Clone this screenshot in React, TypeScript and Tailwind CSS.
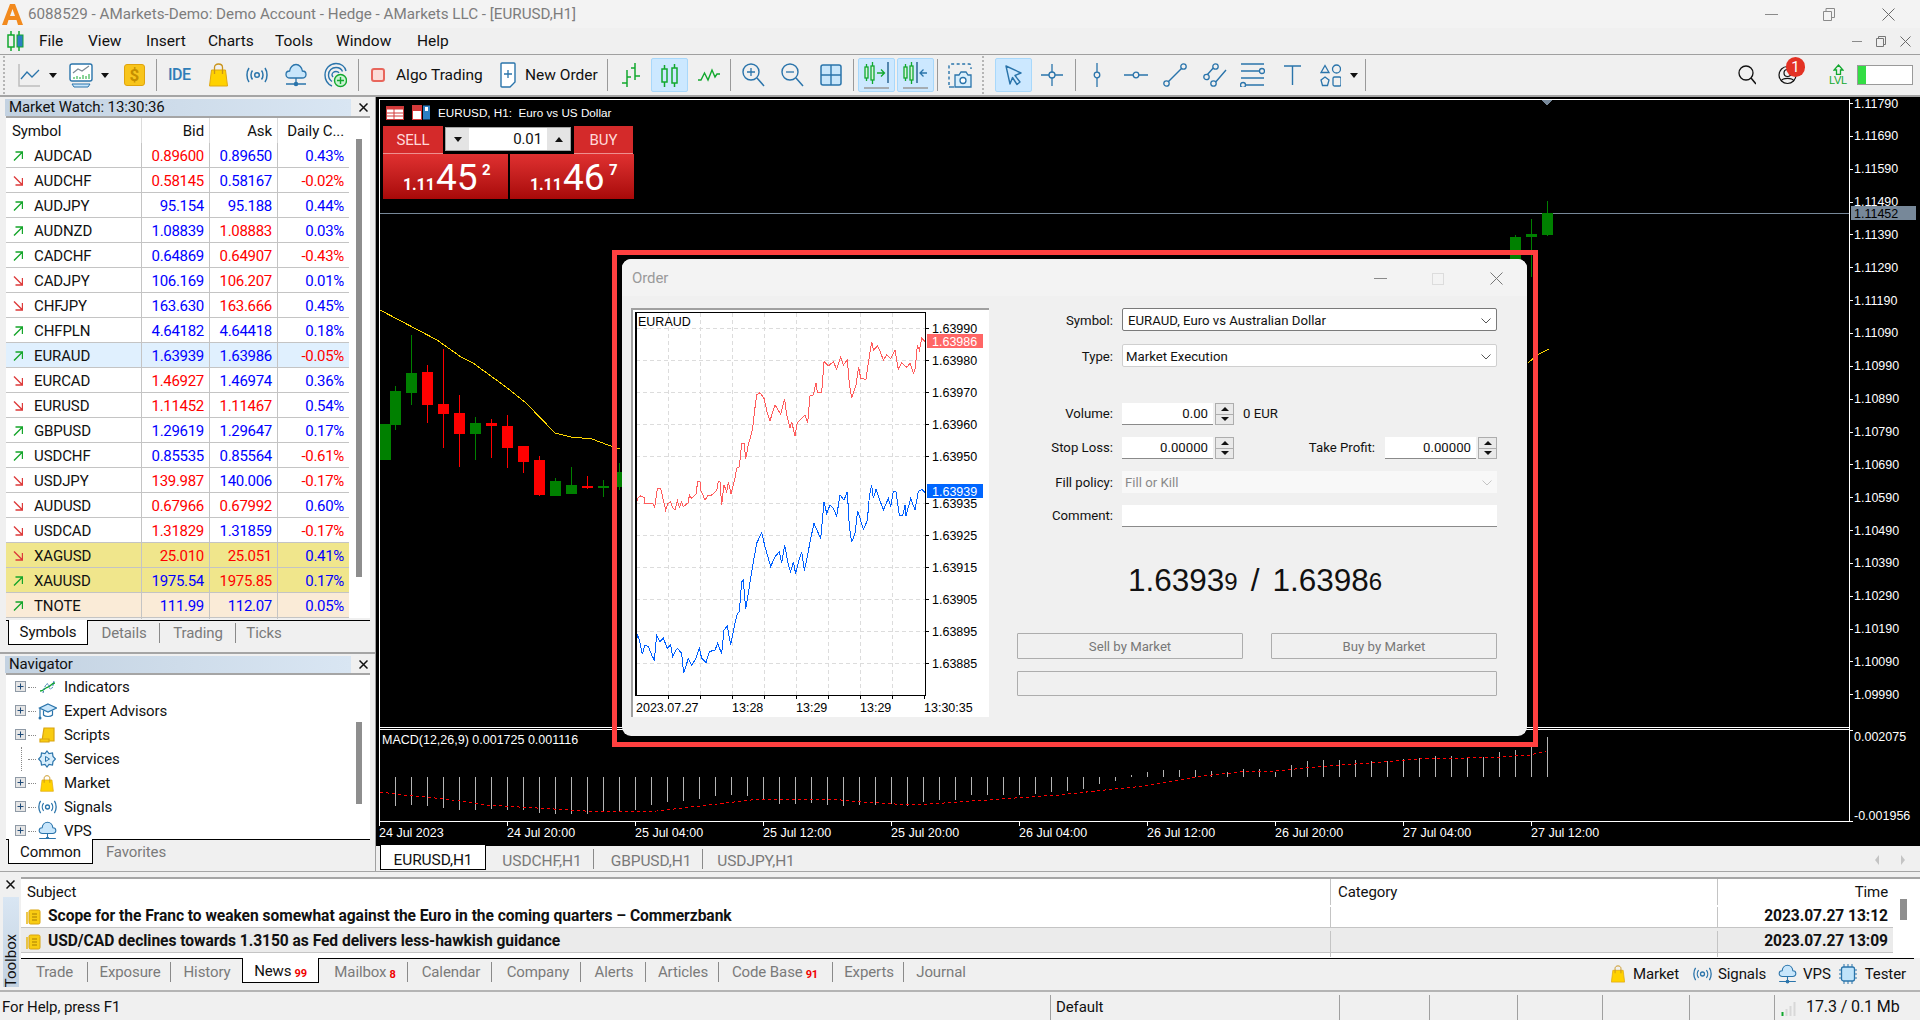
import React from 'react'

const BLUE = '#2a74ab'
const GREEN = '#12a82e'

type Quote = {
  sym: string
  up: boolean
  bid: string
  bidUp: boolean
  ask: string
  askUp: boolean
  chg: string
  bg?: string
}

const quotes: Quote[] = [
  { sym: 'AUDCAD', up: true, bid: '0.89600', bidUp: false, ask: '0.89650', askUp: true, chg: '0.43%' },
  { sym: 'AUDCHF', up: false, bid: '0.58145', bidUp: false, ask: '0.58167', askUp: true, chg: '-0.02%' },
  { sym: 'AUDJPY', up: true, bid: '95.154', bidUp: true, ask: '95.188', askUp: true, chg: '0.44%' },
  { sym: 'AUDNZD', up: true, bid: '1.08839', bidUp: true, ask: '1.08883', askUp: false, chg: '0.03%' },
  { sym: 'CADCHF', up: true, bid: '0.64869', bidUp: true, ask: '0.64907', askUp: false, chg: '-0.43%' },
  { sym: 'CADJPY', up: false, bid: '106.169', bidUp: true, ask: '106.207', askUp: false, chg: '0.01%' },
  { sym: 'CHFJPY', up: false, bid: '163.630', bidUp: true, ask: '163.666', askUp: false, chg: '0.45%' },
  { sym: 'CHFPLN', up: true, bid: '4.64182', bidUp: true, ask: '4.64418', askUp: true, chg: '0.18%' },
  { sym: 'EURAUD', up: true, bid: '1.63939', bidUp: true, ask: '1.63986', askUp: true, chg: '-0.05%', bg: 'bg-[#e0f0fe]' },
  { sym: 'EURCAD', up: false, bid: '1.46927', bidUp: false, ask: '1.46974', askUp: true, chg: '0.36%' },
  { sym: 'EURUSD', up: false, bid: '1.11452', bidUp: false, ask: '1.11467', askUp: false, chg: '0.54%' },
  { sym: 'GBPUSD', up: true, bid: '1.29619', bidUp: true, ask: '1.29647', askUp: true, chg: '0.17%' },
  { sym: 'USDCHF', up: true, bid: '0.85535', bidUp: true, ask: '0.85564', askUp: true, chg: '-0.61%' },
  { sym: 'USDJPY', up: false, bid: '139.987', bidUp: false, ask: '140.006', askUp: true, chg: '-0.17%' },
  { sym: 'AUDUSD', up: false, bid: '0.67966', bidUp: false, ask: '0.67992', askUp: false, chg: '0.60%' },
  { sym: 'USDCAD', up: false, bid: '1.31829', bidUp: false, ask: '1.31859', askUp: true, chg: '-0.17%' },
  { sym: 'XAGUSD', up: false, bid: '25.010', bidUp: false, ask: '25.051', askUp: false, chg: '0.41%', bg: 'bg-[#f0e68c]' },
  { sym: 'XAUUSD', up: true, bid: '1975.54', bidUp: true, ask: '1975.85', askUp: false, chg: '0.17%', bg: 'bg-[#f0e68c]' },
  { sym: 'TNOTE', up: true, bid: '111.99', bidUp: true, ask: '112.07', askUp: true, chg: '0.05%', bg: 'bg-[#faebd7]' },
]

function Ic({ w, h, children, className }: { w: number; h: number; children: React.ReactNode; className?: string }) {
  return (
    <svg width={w} height={h} viewBox={`0 0 ${w} ${h}`} fill="none" className={`shrink-0 ${className ?? ''}`}>
      {children}
    </svg>
  )
}

const Sep = ({ className }: { className: string }) => <div className={`w-px h-[32px] bg-[#9a9a9a] shrink-0 ${className}`} />
const Grip = ({ className }: { className: string }) => (
  <div className={`w-[3px] h-[38px] shrink-0 border-l-2 border-dotted border-[#b5b5b5] ${className}`} />
)
const Drop = ({ className }: { className: string }) => (
  <div className={`w-0 h-0 shrink-0 border-x-[4.5px] border-x-transparent border-t-[5px] border-t-[#111] ${className}`} />
)
const Hl = ({ className, children }: { className: string; children: React.ReactNode }) => (
  <div className={`w-[37px] h-[34px] shrink-0 flex items-center justify-center bg-[#cce8ff] border border-[#a8d8fb] rounded-[2px] ${className}`}>
    {children}
  </div>
)

function Bag({ w = 19, h = 24 }: { w?: number; h?: number }) {
  return (
    <svg width={w} height={h} viewBox="0 0 19 24" fill="none" className="shrink-0">
      <path d="M2.500 7H16.500L18.500 23H.5Z" fill="#ffd200" stroke="#e0a810" />
      <path d="M5.500 11V4.500C5.500 2.500 7 1 9.500 1S13.500 2.500 13.500 4.500V11" stroke="#c9941c" strokeWidth="1.300" />
    </svg>
  )
}

function Signal({ w = 22, h = 16 }: { w?: number; h?: number }) {
  return (
    <svg width={w} height={h} viewBox="0 0 22 16" fill="none" stroke={BLUE} strokeWidth="1.500" className="shrink-0">
      <circle cx="11" cy="8" r="2.300" />
      <path d="M6.500 3.500C4.500 6 4.500 10 6.500 12.500M15.500 3.500C17.500 6 17.500 10 15.500 12.500M3 1C.3 5 .3 11 3 15M19 1C21.700 5 21.700 11 19 15" />
    </svg>
  )
}

function Cloud({ w = 22, h = 24 }: { w?: number; h?: number }) {
  return (
    <svg width={w} height={h} viewBox="0 0 22 24" fill="none" stroke={BLUE} strokeWidth="1.300" className="shrink-0">
      <path d="M5 15C2.500 15 1 13.500 1 11.500S2.600 8 4.600 8C5 4.500 7.600 1.500 11 1.500S17 4.500 17.400 8C19.400 8 21 9.500 21 11.500S19.500 15 17 15Z" fill="#c8e6fb" />
      <path d="M11 15V21M1 21H21" />
      <circle cx="11" cy="21" r="1.600" fill="#2a74ab" />
    </svg>
  )
}

const Radar = () => (
  <Ic w={23} h={26}>
    <g stroke={BLUE} strokeWidth="1.400">
      <path d="M8 24C3.500 22 1 18 1 13 1 6.500 6 1.500 12 1.500C17 1.500 21 4.500 22 9" />
      <path d="M8 19.500C6 18 4.500 15.500 4.500 13 4.500 8.500 8 5.500 12 5.500 15 5.500 17.500 7 18.500 9.500" />
      <path d="M9 15C8.300 14 8 13.500 8 13 8 11 10 9.500 12 9.500 13.500 9.500 14.500 10 15 11" />
    </g>
    <circle cx="16.500" cy="18.500" r="6" fill="#c9f3d2" stroke={GREEN} strokeWidth="1.400" />
    <path d="M16.500 15V22M13 18.500H20" stroke={GREEN} strokeWidth="1.400" />
  </Ic>
)

const Tree = () => (
  <Ic w={12} h={12}>
    <rect x=".5" y=".5" width="10" height="10" fill="#e6e6e6" stroke="#8f9aa6" />
    <path d="M2.500 5.500H8.500M5.500 2.500V8.500" stroke="#1f4a78" />
  </Ic>
)

const MiniCandles = () => (
  <g stroke={GREEN} strokeWidth="1.300">
    <rect x="1" y="6" width="3" height="11" fill="#d6f5dc" />
    <path d="M2.500 3V6M2.500 17V20" />
    <rect x="7" y="5" width="3" height="14" fill="#d6f5dc" />
    <path d="M8.500 1V5M8.500 19V23" />
  </g>
)

function Toolbar() {
  return (
    <div className="h-[40px] flex items-center bg-[#f0f0f0] border-t border-[#a0a0a0] border-b-2 border-b-[#a5a5a5] box-content text-[15.5px] tracking-normal shrink-0">
      <Grip className="ml-[3px]" />
      <Ic w={22} h={23} className="ml-[12px]">
        <path d="M1 0V22H22" stroke="#bdbdbd" strokeWidth="1.500" />
        <path d="M3 15L9 8L14 13L21 6" stroke={BLUE} strokeWidth="1.300" />
      </Ic>
      <Drop className="ml-[9px]" />
      <Ic w={24} h={25} className="ml-[12px]">
        <rect x="1" y="1" width="22" height="17" rx="2" fill="#fff" stroke={BLUE} strokeWidth="1.400" />
        <path d="M4 10L9 6L13 8L20 3" stroke="#7c8a94" strokeWidth="1.200" />
        <path d="M5 16V14M8 16V13M11 16V14M14 16V12M17 16V13M20 16V11" stroke={GREEN} />
        <path d="M3 21H21L19 24H5Z" fill="#c8e6fb" stroke={BLUE} />
      </Ic>
      <Drop className="ml-[8px]" />
      <div className="ml-[15px] w-[21px] h-[22px] rounded-[3px] bg-[#f8c51c] border border-[#e0a40c] flex items-center justify-center text-[#c58e00] text-[17px] font-bold leading-none">$</div>
      <Sep className="ml-[11px]" />
      <div className="ml-[11px] w-[22px] text-[#2f7db8] text-[16px] font-medium leading-none tracking-[-0.5px]">IDE</div>
      <div className="ml-[19px]"><Bag /></div>
      <div className="ml-[18px]"><Signal /></div>
      <div className="ml-[17px]"><Cloud /></div>
      <div className="ml-[17px]"><Radar /></div>
      <Sep className="ml-[11px]" />
      <div className="ml-[12px] w-[14px] h-[14px] rounded-[3px] bg-[#fbdcd7] border-2 border-[#e8665c]" />
      <div className="ml-[11px] w-[86px] text-[#111] pt-[2px] whitespace-nowrap">Algo Trading</div>
      <Ic w={16} h={26} className="ml-[18px]">
        <path d="M2 1H14Q15 1 15 2V20L10 25H2Q1 25 1 24V2Q1 1 2 1Z" fill="#fff" stroke={BLUE} strokeWidth="1.400" />
        <path d="M8 8V16M4 12H12" stroke={BLUE} strokeWidth="1.300" />
      </Ic>
      <div className="ml-[9px] w-[74px] text-[#111] pt-[2px] whitespace-nowrap">New Order</div>
      <Sep className="ml-[8px]" />
      <Ic w={20} h={26} className="ml-[13px]">
        <path d="M6 25V8M1 21H6M6 15H10M14 18V1M10 6H14M14 14H19" stroke={GREEN} strokeWidth="1.500" />
      </Ic>
      <Hl className="ml-[10px]">
        <Ic w={17} h={25}>
          <g stroke={GREEN} strokeWidth="1.500">
            <rect x="1" y="6" width="5" height="13" />
            <path d="M3.500 2V6M3.500 19V24" />
            <rect x="11" y="5" width="5" height="15" />
            <path d="M13.500 1V5M13.500 20V24" />
          </g>
        </Ic>
      </Hl>
      <Ic w={22} h={14} className="ml-[10px]">
        <path d="M0 12H3L6.500 5L10 12L14 2L17 9L19 6H22" stroke={GREEN} strokeWidth="1.400" />
      </Ic>
      <Sep className="ml-[10px]" />
      <Ic w={23} h={24} className="ml-[11px]">
        <circle cx="9" cy="9" r="8" stroke={BLUE} strokeWidth="1.400" />
        <path d="M15 15L22 23" stroke={BLUE} strokeWidth="1.500" />
        <path d="M5 9H13M9 5V13" stroke={BLUE} strokeWidth="1.300" />
      </Ic>
      <Ic w={23} h={24} className="ml-[16px]">
        <circle cx="9" cy="9" r="8" stroke={BLUE} strokeWidth="1.400" />
        <path d="M15 15L22 23" stroke={BLUE} strokeWidth="1.500" />
        <path d="M5 9H13" stroke={BLUE} strokeWidth="1.300" />
      </Ic>
      <Ic w={22} h={22} className="ml-[16px]">
        <rect x="1" y="1" width="20" height="20" rx="2" fill="#c8e6fb" stroke={BLUE} strokeWidth="1.500" />
        <path d="M11 1V21M1 11H21" stroke={BLUE} strokeWidth="1.400" />
      </Ic>
      <Sep className="ml-[11px]" />
      <Hl className="ml-[4px]">
        <Ic w={25} h={28}>
          <MiniCandles />
          <path d="M13 12H20M17 8.500L20.500 12L17 15.500" stroke={GREEN} strokeWidth="1.300" />
          <path d="M24 1V22" stroke="#1f5c8c" strokeWidth="1.400" />
          <path d="M0 27H25" stroke="#999" strokeWidth="1.500" />
        </Ic>
      </Hl>
      <Hl className="ml-[2px]">
        <Ic w={25} h={28}>
          <MiniCandles />
          <path d="M14 1V22" stroke="#1f5c8c" strokeWidth="1.400" />
          <path d="M24 12H17M20.500 8.500L17 12L20.500 15.500" stroke={BLUE} strokeWidth="1.300" />
          <path d="M0 27H25" stroke="#999" strokeWidth="1.500" />
        </Ic>
      </Hl>
      <Sep className="ml-[3px]" />
      <Ic w={24} h={25} className="ml-[10px]">
        <path d="M1 22V3Q1 1 3 1H21Q23 1 23 3V6" stroke={BLUE} strokeWidth="1.400" strokeDasharray="3 2.500" />
        <path d="M1 24H6" stroke={BLUE} strokeWidth="1.400" />
        <path d="M7 24V12H11L13 9H18L20 12H23V24Z" fill="#d8eefc" stroke={BLUE} strokeWidth="1.300" />
        <circle cx="15" cy="17.500" r="3" fill="#fff" stroke={BLUE} strokeWidth="1.300" />
      </Ic>
      <Grip className="ml-[10px]" />
      <Hl className="ml-[10px]">
        <Ic w={20} h={22}>
          <path d="M2 2L17 9L11 11.500L16 18L13 20.500L8.500 13.500L6 20Z" stroke={BLUE} strokeWidth="1.400" strokeLinejoin="round" />
        </Ic>
      </Hl>
      <Ic w={22} h={22} className="ml-[9px]">
        <path d="M11 0V8M11 14V22M0 11H8M14 11H22" stroke={BLUE} strokeWidth="1.300" />
        <circle cx="11" cy="11" r="3" stroke={BLUE} strokeWidth="1.300" />
      </Ic>
      <Sep className="ml-[12px]" />
      <Ic w={8} h={24} className="ml-[17px]">
        <path d="M4 0V9M4 15V24" stroke={BLUE} strokeWidth="1.300" />
        <circle cx="4" cy="12" r="2.800" stroke={BLUE} strokeWidth="1.300" />
      </Ic>
      <Ic w={24} h={8} className="ml-[23px]">
        <path d="M0 4H9M15 4H24" stroke={BLUE} strokeWidth="1.300" />
        <circle cx="12" cy="4" r="2.800" stroke={BLUE} strokeWidth="1.300" />
      </Ic>
      <Ic w={24} h={24} className="ml-[15px]">
        <path d="M5.500 18.500L18.500 5.500" stroke={BLUE} strokeWidth="1.400" />
        <circle cx="3.500" cy="20.500" r="2.700" stroke={BLUE} strokeWidth="1.300" />
        <circle cx="20.500" cy="3.500" r="2.700" stroke={BLUE} strokeWidth="1.300" />
      </Ic>
      <Ic w={24} h={24} className="ml-[16px]">
        <path d="M4 12L12 3M11 21L23 7" stroke={BLUE} strokeWidth="1.400" />
        <circle cx="3.500" cy="14" r="2.700" fill="#f0f0f0" stroke={BLUE} strokeWidth="1.300" />
        <circle cx="12.500" cy="3.500" r="2.700" fill="#f0f0f0" stroke={BLUE} strokeWidth="1.300" />
        <circle cx="10.500" cy="20.500" r="2.700" fill="#f0f0f0" stroke={BLUE} strokeWidth="1.300" />
      </Ic>
      <Ic w={25} h={24} className="ml-[13px]">
        <path d="M1 1H24M1 8H19M1 15H24M5 22H24" stroke={BLUE} strokeWidth="1.300" />
        <circle cx="22" cy="8" r="2.500" fill="#f0f0f0" stroke={BLUE} strokeWidth="1.300" />
        <circle cx="3" cy="22" r="2.500" fill="#f0f0f0" stroke={BLUE} strokeWidth="1.300" />
      </Ic>
      <Ic w={17} h={20} className="ml-[19px]">
        <path d="M0 1H17M8.500 1V20" stroke={BLUE} strokeWidth="1.400" />
      </Ic>
      <Ic w={21} h={23} className="ml-[19px]">
        <path d="M5 1.500L9 8.500H1Z" stroke={BLUE} strokeWidth="1.300" />
        <circle cx="16.500" cy="5" r="4" stroke={BLUE} strokeWidth="1.300" />
        <path d="M5 13L9 16L7.500 21.500H2.500L1 16Z" stroke={BLUE} strokeWidth="1.300" />
        <rect x="13" y="13" width="8" height="9" rx="1.500" stroke={BLUE} strokeWidth="1.300" />
      </Ic>
      <Drop className="ml-[9px]" />
      <Sep className="ml-[7px]" />
      <div className="ml-auto relative flex items-center">
        <Ic w={18} h={20}>
          <circle cx="8" cy="8" r="7" stroke="#111" strokeWidth="1.300" />
          <path d="M13 13L18 19" stroke="#111" strokeWidth="1.500" />
        </Ic>
        <Ic w={19} h={22} className="ml-[22px]">
          <circle cx="9.500" cy="11" r="8.500" stroke="#111" strokeWidth="1.200" />
          <circle cx="9.500" cy="9" r="3.500" stroke="#111" strokeWidth="1.200" />
          <path d="M3 17C5 13.500 14 13.500 16 17" stroke="#111" strokeWidth="1.200" />
        </Ic>
        <div className="absolute left-[48px] -top-[7px] w-[19px] h-[20px] rounded-full bg-[#e33224] text-white text-[15px] leading-[20px] text-center">1</div>
        <div className="ml-[33px] w-[16px] flex flex-col items-center text-[#12a82e] leading-none">
          <Ic w={11} h={11}>
            <path d="M5.500 1L10 6H7.500V10.500H3.500V6H1Z" stroke={GREEN} strokeWidth="1.300" />
          </Ic>
          <span className="text-[11px] font-[Liberation_Sans,sans-serif] tracking-[-0.3px]">LVL</span>
        </div>
        <div className="ml-[11px] mr-[7px] w-[56px] h-[20px] border border-[#9a9a9a] bg-white">
          <div className="w-[8px] h-full bg-[#33dd44]" />
        </div>
      </div>
    </div>
  )
}

function PanelHead({ title }: { title: string }) {
  return (
    <div className="flex items-center h-[17px] pl-[5px] shrink-0">
      <div className="w-[346px] h-[17px] pl-[4px] leading-[17px] bg-linear-to-r from-[#c3d2e1] to-[#d9e6f3] text-[#111]">{title}</div>
      <X className="ml-[8px]" />
    </div>
  )
}

const X = ({ className }: { className: string }) => (
  <Ic w={9} h={9} className={className}>
    <path d="M.5 .5L8.500 8.500M8.500 .5L.5 8.500" stroke="#111" strokeWidth="1.500" />
  </Ic>
)

function Tab({ label, active, className, sup }: { label: string; active?: boolean; className: string; sup?: string }) {
  return (
    <div
      className={`flex items-center justify-center h-[25px] shrink-0 whitespace-nowrap ${
        active ? 'bg-white border-x border-b border-black text-[#111] -mt-px' : 'text-[#7a7a7a]'
      } ${className}`}
    >
      {label}
      {sup && <span className="ml-[3px] mt-[6px] text-[11px] font-bold text-[#f00000]">{sup}</span>}
    </div>
  )
}

const TabSep = ({ className }: { className: string }) => <div className={`w-px h-[20px] bg-[#8a8a8a] shrink-0 ${className}`} />

function MarketWatch() {
  return (
    <div className="h-[555px] pt-[2px] flex flex-col">
      <PanelHead title="Market Watch: 13:30:36" />
      <div className="ml-[6px] w-[364px] h-[502px] bg-white border-t-2 border-[#a5a5a5] flex">
        <div className="w-[343px]">
          <div className="grid grid-cols-[136px_68px_68px_71px] h-[25px] items-center text-[#111]">
            <div className="pl-[6px] border-r border-[#dcdcdc] h-full leading-[27px]">Symbol</div>
            <div className="pr-[5px] text-right border-r border-[#dcdcdc] h-full leading-[27px]">Bid</div>
            <div className="pr-[5px] text-right border-r border-[#dcdcdc] h-full leading-[27px]">Ask</div>
            <div className="pr-[5px] text-right h-full leading-[27px] whitespace-nowrap">Daily C...</div>
          </div>
          {quotes.map((q) => (
            <div key={q.sym} className={`grid grid-cols-[136px_68px_68px_71px] h-[25px] leading-[26px] border-b border-[#c4c4c4] ${q.bg ?? ''}`}>
              <div className="flex items-center border-r border-[#c4c4c4] text-[#111]">
                {q.up ? (
                  <Ic w={10} h={10} className="ml-[7px] mr-[11px]">
                    <path d="M1 9.500L9 1.500M2.500 1H9.500V8" stroke="#14a52a" strokeWidth="1.400" />
                  </Ic>
                ) : (
                  <Ic w={10} h={10} className="ml-[7px] mr-[11px]">
                    <path d="M1 .5L9 8.500M9.500 2V9H2.500" stroke="#dd3a3a" strokeWidth="1.400" />
                  </Ic>
                )}
                {q.sym}
              </div>
              <div className={`pr-[5px] text-right border-r border-[#c4c4c4] tracking-[-0.3px] ${q.bidUp ? 'text-[#0000ff]' : 'text-[#ff0000]'}`}>{q.bid}</div>
              <div className={`pr-[5px] text-right border-r border-[#c4c4c4] tracking-[-0.3px] ${q.askUp ? 'text-[#0000ff]' : 'text-[#ff0000]'}`}>{q.ask}</div>
              <div className={`pr-[5px] text-right tracking-[-0.3px] ${q.chg.startsWith('-') ? 'text-[#ff0000]' : 'text-[#0000ff]'}`}>{q.chg}</div>
            </div>
          ))}
        </div>
        <div className="ml-[7px] mt-[21px] w-[6px] h-[438px] bg-[#8e8e8e]" />
      </div>
      <div className="mt-[2px] ml-[6px] w-[364px] h-[27px] border-t border-black flex items-start bg-[#f0f0f0]">
        <Tab label="Symbols" active className="ml-[2px] w-[80px]" />
        <Tab label="Details" className="ml-[14px] w-[44px]" />
        <TabSep className="ml-[13px] mt-[2px]" />
        <Tab label="Trading" className="ml-[13px] w-[50px]" />
        <TabSep className="ml-[12px] mt-[2px]" />
        <Tab label="Ticks" className="ml-[12px] w-[32px]" />
      </div>
    </div>
  )
}

const navItems: { label: string; icon: React.ReactNode; box?: boolean }[] = [
  {
    label: 'Indicators',
    box: true,
    icon: (
      <Ic w={17} h={15}>
        <path d="M1 11C4 11 5 9 7 8S10 7 12 5 15 3 16 3" stroke={GREEN} strokeWidth="1.300" />
        <path d="M4 13C5 8 7 3 9 4S10 10 12 9 14 4 15 1" stroke={BLUE} strokeWidth="1" strokeDasharray="2 1" />
      </Ic>
    ),
  },
  {
    label: 'Expert Advisors',
    box: true,
    icon: (
      <Ic w={19} h={18}>
        <path d="M10 2L18.500 6L10 10L1.500 6Z" fill="#c8e6fb" stroke={BLUE} strokeWidth="1.200" />
        <path d="M5.500 8.500V13C7.500 15 12.500 15 14.500 13V8.500M2 6V15" stroke={BLUE} strokeWidth="1.200" />
        <circle cx="2" cy="16" r="1.500" fill={BLUE} />
      </Ic>
    ),
  },
  {
    label: 'Scripts',
    box: true,
    icon: (
      <Ic w={16} h={16}>
        <path d="M5 1H15V14H3Z" fill="#f8cc12" stroke="#d9a40f" strokeWidth="1.200" />
        <path d="M1 12H10V15H1Z" fill="#f8cc12" stroke="#d9a40f" strokeWidth="1.200" />
      </Ic>
    ),
  },
  {
    label: 'Services',
    icon: (
      <Ic w={18} h={18}>
        <path d="M9 1L11 3.500L14.500 3L15 6.500L17.500 9L15 11.500L14.500 15L11 14.500L9 17L7 14.500L3.500 15L3 11.500L.5 9L3 6.500L3.500 3L7 3.500Z" fill="#d8eefc" stroke={BLUE} strokeWidth="1.200" />
        <path d="M7.500 6.500L11.500 9L7.500 11.500Z" stroke={BLUE} />
      </Ic>
    ),
  },
  { label: 'Market', box: true, icon: <Bag w={14} h={17} /> },
  { label: 'Signals', box: true, icon: <Signal w={19} h={14} /> },
  { label: 'VPS', box: true, icon: <Cloud w={19} h={20} /> },
]

function Navigator() {
  return (
    <div className="h-[219px] border-t-2 border-[#a5a5a5] pt-[2px] flex flex-col">
      <PanelHead title="Navigator" />
      <div className="ml-[6px] w-[364px] h-[166px] bg-white border-t-2 border-[#a5a5a5] flex">
        <div className="w-[343px] pl-[9px]">
          {navItems.map((n) => (
            <div key={n.label} className="h-[24px] flex items-center text-[#111]">
              <div className="w-[12px] flex justify-center">{n.box ? <Tree /> : <div className="w-px h-[24px] border-l border-dotted border-[#888]" />}</div>
              <div className="w-[8px] ml-[1px] border-t border-dotted border-[#888]" />
              <div className="w-[20px] ml-[1px] flex justify-center">{n.icon}</div>
              <div className="ml-[7px]">{n.label}</div>
            </div>
          ))}
        </div>
        <div className="ml-[7px] mt-[47px] w-[6px] h-[82px] bg-[#8e8e8e]" />
      </div>
      <div className="ml-[6px] w-[364px] h-[27px] border-t border-black flex items-start bg-[#f0f0f0]">
        <Tab label="Common" active className="ml-[2px] w-[85px] pt-[2px]" />
        <Tab label="Favorites" className="ml-[14px] w-[58px]" />
      </div>
    </div>
  )
}

const prices = ['1.11790', '1.11690', '1.11590', '1.11490', '1.11390', '1.11290', '1.11190', '1.11090', '1.10990', '1.10890', '1.10790', '1.10690', '1.10590', '1.10490', '1.10390', '1.10290', '1.10190', '1.10090', '1.09990']
const times = ['24 Jul 2023', '24 Jul 20:00', '25 Jul 04:00', '25 Jul 12:00', '25 Jul 20:00', '26 Jul 04:00', '26 Jul 12:00', '26 Jul 20:00', '27 Jul 04:00', '27 Jul 12:00']

// x, body top and bottom, wick top and bottom, up
const bars: [number, number, number, number, number, boolean][] = [
  [385, 424, 460, 424, 460, true],
  [395.5, 391, 425, 386, 430, true],
  [411.5, 373, 393, 335, 405, true],
  [427.5, 372, 405, 365, 423, false],
  [443.5, 404, 414, 349, 448, false],
  [459.5, 413, 434, 395, 467, false],
  [475.5, 423, 434, 417, 460, true],
  [491.5, 423, 426, 419, 458, false],
  [507.5, 426, 448, 415, 468, false],
  [523.5, 446, 462, 446, 473, false],
  [539.5, 460, 495, 456, 496, false],
  [555.5, 481, 496, 478, 496, true],
  [571.5, 485, 494, 467, 494, true],
  [587.5, 486, 488, 476, 489, false],
  [603.5, 486, 488, 480, 497, true],
  [619.5, 472, 487, 463, 490, true],
  [1515.5, 237, 262, 235, 262, true],
  [1531.5, 234, 237, 219, 277, true],
  [1547.5, 213, 235, 201, 236, true],
]

// histogram height per bar, negative below the zero line
const macd = [-29, -28, -29, -31, -33, -33, -32, -33, -33, -36, -37, -37, -37, -35, -35, -33, -28, -25, -24, -22, -19, -18, -19, -23, -27, -27, -26, -28, -29, -28, -28, -27, -29, -25, -23, -23, -18, -18, -18, -18, -17, -15, -14, -12, -7, -4, 2, 5, 7, 7, 7, 6.5, 5, 7.6, 7.6, 5, 12, 16, 17, 17, 17, 16, 16, 18, 19, 21, 21, 19, 20, 25, 27, 33, 40]

const signal = '380,792 404,795 427,797 460,801 485,805 519,807 554,809 600,812 657,811 691,807 726,803 760,799 795,799 829,799 864,802 910,805 944,803 1001,799 1059,795 1105,790 1145,786 1174,781 1203,776 1231,773 1243,771 1275,771 1305,768 1340,765 1370,763 1405,760 1435,758 1465,758 1500,757 1530,755 1546,751'
const ma = '380,310 437,340 461,357 473,363 506,387 526,403 555,433 571,437 592,439 608,445 620,449'
const chartLabel = 'font-[Liberation_Sans,sans-serif] text-[12.5px] tracking-normal'

function MainChart() {
  return (
    <svg viewBox="376 97 1544 748" width="1544" height="748" shapeRendering="crispEdges" className={`block ${chartLabel}`}>
      <rect x="376" y="97" width="1544" height="748" fill="#000" />
      <path d="M379.500 99V821.500H1849M379 99.500H1849.500V821.500M379 727.500H1849.500M379 729.500H1849.500" stroke="#fff" />
      <path d="M380 213.500H1849" stroke="#778899" />
      <polygon points="1542,100 1552,100 1547,106" fill="#778899" />
      <polyline points={ma} stroke="#ffd700" fill="none" />
      <polyline points="1528,363 1537,355 1549,349" stroke="#ffd700" fill="none" />
      {bars.map(([x, t, b, wt, wb, up]) => (
        <g key={x}>
          <path d={`M${x} ${wt}V${wb}`} stroke={up ? '#008000' : '#ff0000'} />
          <rect x={x - 5.5} y={t} width="11" height={b - t} fill={up ? '#008000' : '#ff0000'} />
        </g>
      ))}
      {macd.map((v, i) => (
        <path key={i} d={`M${395.5 + i * 16} 777V${777 - v}`} stroke="#b4b4b4" />
      ))}
      <polyline points={signal} stroke="#ff0000" fill="none" strokeDasharray="3 3" />
      {prices.map((p, i) => (
        <g key={p}>
          <path d={`M1849 ${103.5 + i * 32.85}H1853`} stroke="#fff" />
          <text x="1854" y={107.5 + i * 32.85} fill="#fff">{p}</text>
        </g>
      ))}
      <rect x="1851" y="206" width="65" height="14" fill="#778899" />
      <text x="1854" y="217.500" fill="#000">1.11452</text>
      <path d="M1849 730H1853M1849 821H1853" stroke="#fff" />
      <text x="1854" y="740.500" fill="#fff">0.002075</text>
      <text x="1854" y="819.500" fill="#fff">-0.001956</text>
      <text x="382" y="743.500" fill="#fff">MACD(12,26,9) 0.001725 0.001116</text>
      {times.map((t, i) => (
        <g key={t}>
          <path d={`M${507.5 + (i - 1) * 128} 821V826`} stroke="#fff" />
          <text x={379 + i * 128} y="837" fill="#fff">{t}</text>
        </g>
      ))}
    </svg>
  )
}

function TradePanel() {
  return (
    <div className="absolute left-[7px] top-[29px] w-[251px] h-[73px] text-white">
      <div className="flex h-[28px]">
        <div className="w-[60px] pt-[2px] bg-[#d42a2a] flex items-center justify-center border-b border-[#ee8f8f] text-[15px] text-[#ffd8d8]">SELL</div>
        <div className="ml-[2px] mt-px w-[126px] h-[24px] bg-[#e4e4e4] border border-[#a5a5a5] flex items-center text-[#111]">
          <div className="w-[23px] flex justify-center"><Drop className="" /></div>
          <div className="w-[78px] h-full bg-white pr-[5px] text-right leading-[22px]">0.01</div>
          <div className="w-[23px] flex justify-center">
            <div className="w-0 h-0 border-x-[4.5px] border-x-transparent border-b-[5px] border-b-[#111]" />
          </div>
        </div>
        <div className="ml-[3px] w-[59px] pt-[2px] bg-[#d42a2a] flex items-center justify-center border-b border-[#ee8f8f] text-[15px] text-[#ffd8d8]">BUY</div>
      </div>
      <div className="flex gap-[2px] h-[45px]">
        <PriceBox big="45" small="2" className="w-[125px]" />
        <PriceBox big="46" small="7" className="w-[124px]" />
      </div>
    </div>
  )
}

function PriceBox({ big, small, className }: { big: string; small: string; className: string }) {
  return (
    <div className={`relative bg-linear-to-b from-[#e03030] to-[#a80808] ${className}`}>
      <span className="absolute left-[20px] top-[21px] text-[16px] font-bold leading-[20px]">1.11</span>
      <span className="absolute left-[53px] top-[2px] text-[37px] leading-[44px]">{big}</span>
      <span className="absolute left-[99px] top-[7px] text-[15px] font-bold leading-[18px]">{small}</span>
    </div>
  )
}

const askPts = '48,780 52,745 72,742 75,762 100,762 104,772 112,716 122,716 130,750 137,780 143,762 152,756 157,772 165,780 172,752 178,772 185,755 190,770 205,758 208,735 215,745 228,732 233,695 240,695 243,722 255,750 265,735 275,735 290,722 295,695 300,695 305,765 312,705 320,725 325,695 333,732 345,685 350,655 358,650 365,580 373,580 377,628 385,582 395,550 400,520 403,488 410,435 420,428 432,445 442,490 450,512 465,465 482,492 494,447 500,495 510,535 515,515 525,558 532,518 545,505 555,495 563,518 570,438 580,435 588,398 592,428 605,428 612,335 625,348 640,335 650,358 662,322 670,345 682,330 688,400 695,445 708,405 716,350 722,385 738,388 745,340 755,275 760,300 772,288 790,330 800,315 812,325 825,300 835,358 845,338 860,352 870,340 880,370 886,355 892,285 898,300 905,265 915,275'
const bidPts = '48,1200 52,1152 58,1170 67,1212 75,1185 85,1190 95,1215 103,1230 110,1155 120,1175 130,1165 142,1195 152,1185 158,1220 165,1205 172,1195 185,1210 191,1270 205,1225 215,1245 228,1225 238,1195 245,1225 258,1238 268,1205 285,1200 293,1180 305,1212 312,1140 322,1128 332,1185 345,1120 352,1090 358,1085 365,995 370,990 377,1078 388,1010 395,965 403,920 410,880 425,848 435,890 452,950 465,920 478,905 485,940 494,885 505,945 512,965 520,935 527,972 545,905 553,962 565,905 570,875 582,820 595,850 602,865 612,755 620,790 630,765 650,798 660,735 672,750 682,725 688,830 695,877 705,850 713,782 730,838 742,812 748,740 755,705 760,745 768,718 790,780 805,745 812,770 820,725 828,725 838,795 848,798 855,765 858,798 872,745 885,780 895,725 905,718 915,728'

// points above were read off at 3x, relative to x=620 y=250; the tick noise is added back between them
const tickLine = (s: string) => {
  const pts = s.split(' ').map((p) => p.split(',').map(Number))
  const out: string[] = []
  pts.forEach(([x, y], i) => {
    const next = pts[i + 1]
    out.push(`${620 + x / 3},${250 + y / 3}`)
    if (!next) return
    const steps = Math.floor((next[0] - x) / 9)
    for (let k = 1; k < steps; k++) {
      const t = k / steps
      const noise = ((k * 7 + i * 13) % 5) - 2
      out.push(`${620 + (x + (next[0] - x) * t) / 3},${250 + (y + (next[1] - y) * t) / 3 + noise}`)
    }
  })
  return out.join(' ')
}

const miniPrices: [string, number][] = [
  ['1.63990', 328], ['1.63980', 360], ['1.63970', 392], ['1.63960', 424], ['1.63950', 456],
  ['1.63935', 503.5], ['1.63925', 535.5], ['1.63915', 567.5], ['1.63905', 599.5], ['1.63895', 631.5], ['1.63885', 663.5],
]

function MiniChart() {
  return (
    <svg viewBox="631 308 358 409" width="358" height="409" shapeRendering="crispEdges" className={`block shrink-0 ${chartLabel}`}>
      <rect x="631" y="308" width="358" height="409" fill="#fff" />
      <path d="M632 717V309H989" stroke="#a0a0a0" strokeWidth="2" fill="none" />
      {miniPrices.map(([, y]) => (
        <path key={y} d={`M636 ${y}H925`} stroke="#dcdcdc" strokeDasharray="4 3" />
      ))}
      {[668, 700, 732, 764, 796, 828, 860, 892].map((x) => (
        <path key={x} d={`M${x + 0.5} 313V695`} stroke="#dcdcdc" strokeDasharray="4 3" />
      ))}
      <polyline points={tickLine(askPts)} stroke="#ff5c5c" fill="none" />
      <polyline points={tickLine(bidPts)} stroke="#0060ff" fill="none" />
      <rect x="635.500" y="312.500" width="290" height="383" stroke="#000" fill="none" />
      <path d="M636 312V695" stroke="#000" strokeWidth="1.500" />
      <text x="638" y="326" fill="#000">EURAUD</text>
      {miniPrices.map(([p, y]) => (
        <g key={p}>
          <path d={`M925 ${y}H929`} stroke="#000" />
          <text x="932" y={y + 4.5} fill="#000">{p}</text>
        </g>
      ))}
      <rect x="927" y="334" width="56" height="14" fill="#ff6666" />
      <text x="932" y="345.500" fill="#fff">1.63986</text>
      <rect x="927" y="484" width="56" height="14" fill="#0066ff" />
      <text x="932" y="495.500" fill="#fff">1.63939</text>
      {[668, 700, 732, 764, 796, 828, 860, 892, 924].map((x) => (
        <path key={x} d={`M${x + 0.5} 695V699`} stroke="#000" />
      ))}
      <text x="636" y="711.500" fill="#000">2023.07.27</text>
      <text x="732" y="711.500" fill="#000">13:28</text>
      <text x="796" y="711.500" fill="#000">13:29</text>
      <text x="860" y="711.500" fill="#000">13:29</text>
      <text x="924" y="711.500" fill="#000">13:30:35</text>
    </svg>
  )
}

const Spin = ({ className }: { className?: string }) => (
  <div className={`w-[19px] h-[22px] shrink-0 flex flex-col border border-[#adadad] bg-[#e9e9e9] ${className ?? ''}`}>
    <div className="flex-1 flex items-center justify-center border-b border-[#adadad]">
      <div className="w-0 h-0 border-x-[4px] border-x-transparent border-b-[4px] border-b-[#111]" />
    </div>
    <div className="flex-1 flex items-center justify-center">
      <div className="w-0 h-0 border-x-[4px] border-x-transparent border-t-[4px] border-t-[#111]" />
    </div>
  </div>
)

const Chevron = ({ color = '#555' }: { color?: string }) => (
  <Ic w={10} h={6} className="ml-auto mr-[5px]">
    <path d="M.5 .5L5 5L9.500 .5" stroke={color} />
  </Ic>
)

const Label = ({ children, className }: { children: React.ReactNode; className?: string }) => (
  <div className={`w-[96px] mr-[9px] text-right text-[#111] shrink-0 ${className ?? ''}`}>{children}</div>
)

function OrderForm() {
  return (
    <div className="ml-[28px] w-[480px] text-[13.2px] tracking-normal text-[#111]">
      <div className="flex items-center h-[23px]">
        <Label className="pt-[2px]">Symbol:</Label>
        <div className="w-[375px] h-[23px] pt-[2px] bg-white border border-[#7a7a7a] rounded-[2px] flex items-center pl-[5px]">
          EURAUD, Euro vs Australian Dollar
          <Chevron />
        </div>
      </div>
      <div className="flex items-center h-[23px] mt-[13px]">
        <Label className="pt-[2px]">Type:</Label>
        <div className="w-[375px] h-[23px] pt-[2px] bg-white border border-[#cfcfcf] rounded-[2px] flex items-center pl-[3px]">
          Market Execution
          <Chevron />
        </div>
      </div>
      <div className="flex items-center h-[22px] mt-[36px]">
        <Label>Volume:</Label>
        <div className="w-[91px] h-[22px] bg-white border-b border-[#8a8a8a] text-right pr-[5px] leading-[22px]">0.00</div>
        <Spin className="ml-[2px]" />
        <div className="ml-[9px]">0 EUR</div>
      </div>
      <div className="flex items-center h-[22px] mt-[12px]">
        <Label>Stop Loss:</Label>
        <div className="w-[91px] h-[22px] bg-white border-b border-[#8a8a8a] text-right pr-[5px] leading-[22px]">0.00000</div>
        <Spin className="ml-[2px]" />
        <div className="w-[141px] text-right">Take Profit:</div>
        <div className="ml-[10px] w-[91px] h-[22px] bg-white border-b border-[#8a8a8a] text-right pr-[5px] leading-[22px]">0.00000</div>
        <Spin className="ml-[2px]" />
      </div>
      <div className="flex items-center h-[22px] mt-[12px]">
        <Label className="pt-[1px]">Fill policy:</Label>
        <div className="w-[375px] h-[22px] pt-[1px] bg-[#f8f8f8] text-[#8a8a8a] flex items-center pl-[3px]">
          Fill or Kill
          <Chevron color="#c4c4c4" />
        </div>
      </div>
      <div className="flex items-center h-[22px] mt-[12px]">
        <Label>Comment:</Label>
        <div className="w-[375px] h-[22px] bg-white border-b border-[#8a8a8a]" />
      </div>
      <div className="h-[106px] flex items-center pt-[2px] pl-[111px] font-[Liberation_Sans,sans-serif] text-[31.5px] leading-none text-[#111]">
        1.6393<span className="text-[24px] translate-y-[1px]">9</span>
        <span className="ml-[13px] mr-[13px]">/</span>
        1.6398<span className="text-[24px] translate-y-[1px]">6</span>
      </div>
      <div className="flex justify-between">
        <div className="w-[226px] h-[26px] border border-[#adadad] rounded-[1px] text-center leading-[25px] text-[#777]">Sell by Market</div>
        <div className="w-[226px] h-[26px] border border-[#adadad] rounded-[1px] text-center leading-[25px] text-[#777]">Buy by Market</div>
      </div>
      <div className="mt-[12px] h-[25px] border border-[#adadad] rounded-[1px]" />
    </div>
  )
}

function OrderDialog() {
  return (
    <>
      {/* highlight frame drawn over the terminal */}
      <div className="absolute left-[236px] top-[153px] w-[926px] h-[497px] border-[5px] border-[#ff4040]" />
      <div className="absolute left-[246px] top-[162px] w-[905px] h-[477px] rounded-[9px] bg-[#f0f0f0] overflow-hidden">
        <div className="h-[37px] pt-[2px] bg-[#f3f3f3] flex items-center pl-[10px] text-[15px] text-[#9a9a9a]">
          Order
          <div className="ml-auto w-[13px] h-px bg-[#8a8a8a]" />
          <div className="ml-[45px] w-[12px] h-[12px] border border-[#dcdcdc]" />
          <Ic w={13} h={13} className="ml-[46px] mr-[24px]">
            <path d="M.5 .5L12.500 12.500M12.500 .5L.5 12.500" stroke="#777" />
          </Ic>
        </div>
        <div className="flex pl-[9px] pt-[12px]">
          <MiniChart />
          <OrderForm />
        </div>
      </div>
    </>
  )
}

function ChartArea() {
  return (
    <div className="flex-1 relative flex flex-col">
      <MainChart />
      <Ic w={19} h={14} className="absolute left-[10px] top-[9px]">
        <rect x=".5" y=".5" width="17" height="13" fill="#fff" stroke="#c93a3a" />
        <rect x=".5" y=".5" width="17" height="3" fill="#d43a3a" />
        <path d="M1 7H17M1 10H17M8 3V13" stroke="#d43a3a" />
      </Ic>
      <Ic w={19} h={15} className="absolute left-[36px] top-[8px]">
        <rect x=".5" y=".5" width="9" height="14" fill="#fff" stroke="#d43a3a" />
        <rect x="1" y="1" width="8" height="5" fill="#d43a3a" />
        <rect x="11" y=".5" width="7" height="14" fill="#2d7fc4" />
        <rect x="13" y="2" width="3" height="4" fill="#fff" />
      </Ic>
      <div className="absolute left-[62px] top-[8px] text-white text-[11.7px] font-[Liberation_Sans,sans-serif] tracking-normal leading-[15px] whitespace-pre">EURUSD, H1:  Euro vs US Dollar</div>
      <TradePanel />
      <OrderDialog />
      <div className="h-[26px] flex items-start bg-[#f0f0f0] border-t border-black text-[15.5px]">
        <Tab label="EURUSD,H1" active className="ml-[4px] w-[106px] pt-[7px]" />
        <Tab label="USDCHF,H1" className="ml-[16px] w-[80px] pt-[7px]" />
        <TabSep className="ml-[11px] mt-[3px]" />
        <Tab label="GBPUSD,H1" className="ml-[17px] w-[80px] pt-[7px]" />
        <TabSep className="ml-[11px] mt-[3px]" />
        <Tab label="USDJPY,H1" className="ml-[17px] w-[72px] pt-[7px]" />
        <div className="ml-auto mr-[15px] mt-[9px] flex gap-[22px]">
          <div className="w-0 h-0 border-y-[5px] border-y-transparent border-r-[4px] border-r-[#c4c4c4]" />
          <div className="w-0 h-0 border-y-[5px] border-y-transparent border-l-[4px] border-l-[#c4c4c4]" />
        </div>
      </div>
    </div>
  )
}

const NewsIcon = () => (
  <Ic w={15} h={16} className="mx-[5px] shrink-0">
    <rect x="3" y="1" width="11" height="14" rx="1.500" fill="#f8cc12" stroke="#d9a40f" />
    <path d="M1 3V15" stroke="#e8b60f" strokeWidth="1.500" />
    <path d="M6 5H11M6 8H11M6 11H11" stroke="#a87c00" />
  </Ic>
)

const news = [
  { title: 'Scope for the Franc to weaken somewhat against the Euro in the coming quarters – Commerzbank', time: '2023.07.27 13:12', bg: 'bg-white h-[23px] pt-[2px]' },
  { title: 'USD/CAD declines towards 1.3150 as Fed delivers less-hawkish guidance', time: '2023.07.27 13:09', bg: 'bg-[#ebebeb] h-[25px] pt-[3px]' },
]

function Toolbox() {
  return (
    <div className="h-[119px] border-t border-[#a5a5a5] flex pt-[5px] shrink-0">
      <div className="w-[21px] shrink-0 flex flex-col items-center">
        <X className="mt-[3px]" />
        <div className="mt-[8px] ml-[1px] w-[16px] h-[90px] bg-linear-to-b from-[#d9e6f3] to-[#c3d2e1] flex items-end justify-center">
          <span className="[writing-mode:vertical-rl] rotate-180 text-[15px] leading-[16px] text-[#111] tracking-normal">Toolbox</span>
        </div>
      </div>
      <div className="flex-1 min-w-0">
        <div className="h-[81px] flex border-t-2 border-[#a5a5a5] bg-white">
          <div className="w-[1872px] text-[#111]">
            <div className="h-[26px] flex leading-[26px]">
              <div className="w-[1309px] pl-[6px]">Subject</div>
              <div className="w-[387px] pl-[7px] border-l border-[#c4c4c4]">Category</div>
              <div className="flex-1 pr-[5px] text-right border-l border-[#c4c4c4]">Time</div>
            </div>
            {news.map((n) => (
              <div key={n.time} className={`flex items-center font-bold text-[15.6px] tracking-[-0.05px] border-b border-[#c4c4c4] ${n.bg}`}>
                <div className="w-[1309px] flex items-center h-full whitespace-nowrap">
                  <NewsIcon />
                  <span className="ml-[2px]">{n.title}</span>
                </div>
                <div className="w-[387px] h-full border-l border-[#c4c4c4]" />
                <div className="flex-1 h-full flex items-center justify-end pr-[5px] border-l border-[#c4c4c4]">{n.time}</div>
              </div>
            ))}
            <div className="flex h-[4px]">
              <div className="w-[1309px]" />
              <div className="w-[387px] border-l border-[#c4c4c4]" />
              <div className="flex-1 border-l border-[#c4c4c4]" />
            </div>
          </div>
          <div className="ml-[7px] mt-[20px] w-[7px] h-[21px] bg-[#8e8e8e]" />
        </div>
        <div className="h-[27px] mr-[6px] border-t border-black flex items-start bg-[#f0f0f0] [&>div]:pt-[2px]">
          <Tab label="Trade" className="ml-[15px] w-[37px]" />
          <TabSep className="ml-[14px] mt-[3px]" />
          <Tab label="Exposure" className="ml-[12px] w-[60px]" />
          <TabSep className="ml-[10px] mt-[3px]" />
          <Tab label="History" className="ml-[12px] w-[48px]" />
          <Tab label="News" sup="99" active className="ml-[11px] w-[77px]" />
          <Tab label="Mailbox" sup="8" className="ml-[13px] w-[66px]" />
          <TabSep className="ml-[9px] mt-[3px]" />
          <Tab label="Calendar" className="ml-[13px] w-[60px]" />
          <TabSep className="ml-[10px] mt-[3px]" />
          <Tab label="Company" className="ml-[14px] w-[64px]" />
          <TabSep className="ml-[10px] mt-[3px]" />
          <Tab label="Alerts" className="ml-[14px] w-[38px]" />
          <TabSep className="ml-[12px] mt-[3px]" />
          <Tab label="Articles" className="ml-[12px] w-[50px]" />
          <TabSep className="ml-[10px] mt-[3px]" />
          <Tab label="Code Base" sup="91" className="ml-[12px] w-[88px]" />
          <TabSep className="ml-[13px] mt-[3px]" />
          <Tab label="Experts" className="ml-[12px] w-[48px]" />
          <TabSep className="ml-[10px] mt-[3px]" />
          <Tab label="Journal" className="ml-[14px] w-[46px]" />
          <div className="ml-auto mt-[3px] flex items-center h-[22px] text-[#111]">
            <Bag w={14} h={18} />
            <span className="ml-[8px]">Market</span>
            <div className="ml-[14px]"><Signal w={19} h={14} /></div>
            <span className="ml-[6px]">Signals</span>
            <div className="ml-[12px]"><Cloud w={19} h={20} /></div>
            <span className="ml-[6px]">VPS</span>
            <Ic w={18} h={20} className="ml-[8px]">
              <rect x="2.500" y="3" width="13" height="14" rx="2" fill="#bfe3fa" stroke={BLUE} strokeWidth="1.300" />
              <path d="M5 0V3M9 0V3M13 0V3M5 17V20M9 17V20M13 17V20M0 6H2.500M0 10H2.500M0 14H2.500M15.500 6H18M15.500 10H18M15.500 14H18" stroke={BLUE} />
            </Ic>
            <span className="ml-[8px] mr-[8px]">Tester</span>
          </div>
        </div>
      </div>
    </div>
  )
}

function StatusBar() {
  const cell = 'h-[25px] border-l border-[#a0a0a0] shrink-0'
  return (
    <div className="h-[30px] border-t-2 border-[#b4b4b4] flex items-center pt-[2px] text-[#111] shrink-0">
      <div className="w-[1050px] pl-[2px]">For Help, press F1</div>
      <div className={`${cell} w-[289px] pl-[5px] leading-[25px]`}>Default</div>
      <div className={`${cell} w-[90px]`} />
      <div className={`${cell} w-[88px]`} />
      <div className={`${cell} w-[85px]`} />
      <div className={`${cell} w-[87px]`} />
      <div className={`${cell} w-[85px]`} />
      <div className={`${cell} flex-1 flex items-center pl-[6px] text-[16px]`}>
        <Ic w={17} h={17}>
          <path d="M1.500 13V17" stroke="#12a82e" strokeWidth="2" />
          <path d="M5.500 10V17M9.500 7V17M13.500 3V17" stroke="#d8d8d8" strokeWidth="2" />
        </Ic>
        <span className="ml-[8px]">17.3 / 0.1 Mb</span>
      </div>
    </div>
  )
}

export default function App() {
  return (
    <div className="w-[1920px] h-[1020px] overflow-hidden flex flex-col bg-[#f0f0f0] font-[Roboto,sans-serif] text-[15px] tracking-[-0.1px]">
      <div className="h-[28px] pt-[1px] bg-[#f3f3f3] flex items-center text-[15.2px] tracking-normal text-[#7d7d7d] shrink-0">
        <Ic w={21} h={23} className="ml-[2px]">
          <path d="M0 22L8 1H13L21 22H16L14.500 17H6.500L5 22Z" fill="#f28a1e" />
          <path d="M8 13H13L10.500 6Z" fill="#f3f3f3" />
        </Ic>
        <span className="ml-[5px]">6088529 - AMarkets-Demo: Demo Account - Hedge - AMarkets LLC - [EURUSD,H1]</span>
        <div className="ml-auto w-[13px] h-px bg-[#8a8a8a]" />
        <Ic w={12} h={13} className="ml-[45px]">
          <path d="M.5 3.500H8.500V12.500H.5ZM3 3V.5H11.500V9.500H9" stroke="#8a8a8a" />
        </Ic>
        <Ic w={13} h={13} className="ml-[47px] mr-[25px]">
          <path d="M.5 .5L12.500 12.500M12.500 .5L.5 12.500" stroke="#6a6a6a" />
        </Ic>
      </div>
      <div className="h-[26px] flex items-center text-[#111] text-[15.5px] tracking-normal shrink-0">
        <Ic w={17} h={20} className="ml-[7px]">
          <path d="M4 0V4M4 16V20M12 0V4M12 16V20" stroke={GREEN} strokeWidth="1.500" />
          <rect x="1" y="4" width="6" height="12" stroke={GREEN} strokeWidth="1.500" />
          <rect x="10" y="4" width="6" height="12" fill="#2d7fc4" stroke={GREEN} strokeWidth="1" />
        </Ic>
        <div className="ml-[15px] flex pt-[2px]">
          <span className="w-[49px]">File</span>
          <span className="w-[58px]">View</span>
          <span className="w-[62px]">Insert</span>
          <span className="w-[67px]">Charts</span>
          <span className="w-[61px]">Tools</span>
          <span className="w-[81px]">Window</span>
          <span>Help</span>
        </div>
        <div className="ml-auto w-[10px] h-px bg-[#8a8a8a]" />
        <Ic w={10} h={11} className="ml-[14px]">
          <path d="M.5 2.500H7.500V10.500H.5ZM2.500 2V.5H9.500V8.500H8" stroke="#777" />
        </Ic>
        <Ic w={11} h={11} className="ml-[14px] mr-[9px]">
          <path d="M.5 .5L10.500 10.500M10.500 .5L.5 10.500" stroke="#6a6a6a" />
        </Ic>
      </div>
      <Toolbar />
      <div className="h-[774px] flex shrink-0">
        <div className="w-[376px] shrink-0 border-r border-[#a0a0a0]">
          <MarketWatch />
          <Navigator />
        </div>
        <ChartArea />
      </div>
      <Toolbox />
      <StatusBar />
    </div>
  )
}
